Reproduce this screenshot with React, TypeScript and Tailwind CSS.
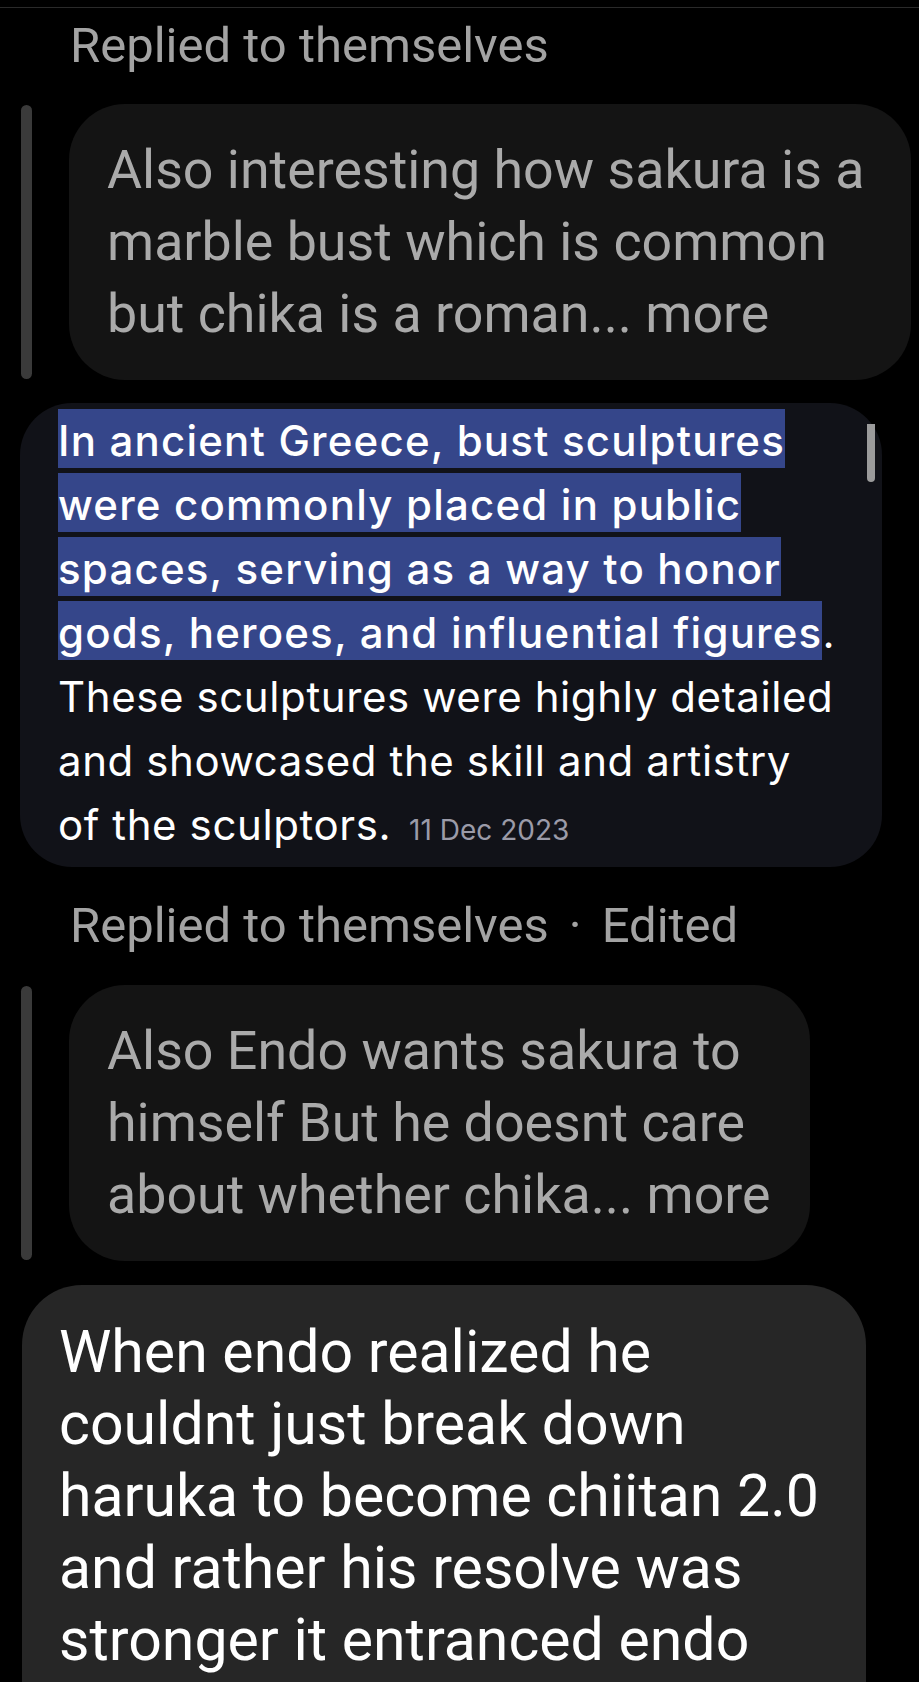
import React from "react";

const sf = "font-['Roboto','Liberation_Sans',sans-serif]";
const gs = "font-['Inter','Open_Sans',sans-serif]";

function Label({ children }: { children: React.ReactNode }) {
  return (
    <div className={`${sf} pl-[70px] text-[49px] leading-[44px] text-[#a3a3a3] whitespace-nowrap`}>
      {children}
    </div>
  );
}

function QuotedReply({ lines, width }: { lines: string[]; width: string }) {
  return (
    <div className="flex pl-[21px]">
      <div className="my-px w-[11px] shrink-0 rounded-full bg-[#3a3a3a]" />
      <div
        className={`ml-[37px] ${width} rounded-[56px] bg-[#141414] pl-[38px] pt-[30px] pb-[30px] ${sf} text-[53.75px] leading-[72px] text-[#aaaaaa]`}
      >
        {lines.map((l) => (
          <div key={l} className="whitespace-nowrap">
            {l}
          </div>
        ))}
      </div>
    </div>
  );
}

const highlighted = [
  "In ancient Greece, bust sculptures",
  "were commonly placed in public",
  "spaces, serving as a way to honor",
  "gods, heroes, and influential figures",
];

const plain = ["These sculptures were highly detailed", "and showcased the skill and artistry"];

export default function App() {
  return (
    <div className="h-[1682px] overflow-hidden bg-black">
      <div className="h-[7px]" />
      <div className="h-px bg-[#2a2a2a]" />

      <div className="mt-[16px]">
        <Label>Replied to themselves</Label>
      </div>

      <div className="mt-[36px]">
        <QuotedReply
          width="w-[842px]"
          lines={["Also interesting how sakura is a", "marble bust which is common", "but chika is a roman... more"]}
        />
      </div>

      {/* selected text bubble */}
      <div
        className={`relative mt-[23px] ml-[20px] w-[862px] rounded-[52px] bg-[#111218] pl-[38px] pt-[6px] pb-[10px] ${gs} text-[42px] tracking-[0.6px] text-white`}
      >
        <div className="absolute right-[7px] top-[21px] h-[58px] w-[8px] rounded-b-full bg-[#9b9b9b]" />
        {highlighted.map((l, i) => (
          <div key={l} className="h-[64px] whitespace-nowrap">
            <span className="inline-block h-[59px] bg-[#35468a] pt-[4px] font-medium leading-[55px] tracking-[1.2px]">
              {l}
            </span>
            {i === highlighted.length - 1 && <span className="leading-[59px]">.</span>}
          </div>
        ))}
        {plain.map((l) => (
          <div key={l} className="h-[64px] whitespace-nowrap pt-[4px] leading-[55px]">
            {l}
          </div>
        ))}
        <div className="h-[64px] whitespace-nowrap pt-[4px] leading-[55px]">
          of the sculptors.
          <span className="ml-[18px] text-[28px] tracking-normal text-[#9b9ba8]">11 Dec 2023</span>
        </div>
      </div>

      <div className="mt-[37px]">
        <Label>
          Replied to themselves
          <span className="mx-[20px]">·</span>
          Edited
        </Label>
      </div>

      <div className="mt-[37px]">
        <QuotedReply
          width="w-[741px]"
          lines={["Also Endo wants sakura to", "himself But he doesnt care", "about whether chika... more"]}
        />
      </div>

      <div
        className={`mt-[24px] ml-[22px] w-[844px] rounded-t-[60px] bg-[#262626] pl-[37px] pt-[31px] pb-[40px] ${sf} text-[59px] leading-[72px] text-white`}
      >
        {[
          "When endo realized he",
          "couldnt just break down",
          "haruka to become chiitan 2.0",
          "and rather his resolve was",
          "stronger it entranced endo",
        ].map((l) => (
          <div key={l} className="whitespace-nowrap">
            {l}
          </div>
        ))}
      </div>
    </div>
  );
}
